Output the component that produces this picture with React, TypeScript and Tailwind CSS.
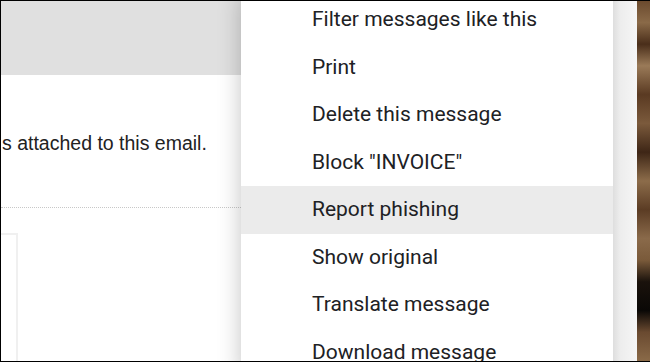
import React from 'react';

const menuItems = [
  'Filter messages like this',
  'Print',
  'Delete this message',
  'Block "INVOICE"',
  'Report phishing',
  'Show original',
  'Translate message',
  'Download message',
];

export default function App() {
  return (
    <div className="flex w-[650px] h-[362px] overflow-hidden border-y border-l border-black bg-white">
      {/* mail page */}
      <div className="relative w-[612px] h-full overflow-hidden bg-white">
        <div className="h-[74px] bg-[#e0e0e0]" />
        <div className="pt-[56px] font-['Liberation_Sans',Arial,sans-serif]">
          <p className="text-[19.5px] leading-[24px] text-[#222] pl-[1px]">s attached to this email.</p>
          <div className="mt-[52px] border-b border-dotted border-[#c8c8c8]" />
          <div className="mt-[25px] w-[17px] h-[140px] border-t-2 border-r-2 border-[#f0f0f0]" />
        </div>

        {/* overflow menu */}
        <div className="absolute right-0 top-[-5px] w-[372px] bg-white shadow-[0_0_22px_rgba(0,0,0,0.24)] font-['Roboto',sans-serif]">
          {menuItems.map((item) => (
            <div
              key={item}
              className={`h-[47.5px] flex items-center pl-[71px] text-[21px] text-[#202124] ${
                item === 'Report phishing' ? 'bg-[#ebebeb]' : ''
              }`}
            >
              {item}
            </div>
          ))}
        </div>
      </div>

      {/* window edge */}
      <div className="w-[24px] h-full bg-[linear-gradient(to_right,#dedede,#ededed_30%,#f6f6f6)]" />

      {/* desktop photo */}
      <div className="w-[13px] h-full bg-[linear-gradient(to_bottom,#6b4a2e,#8a6a48_6%,#4a2e1a_12%,#9a7a58_18%,#5a3a22_26%,#7b5a3c_34%,#3e2616_42%,#8c6c4a_50%,#5b3c24_58%,#8a6a4a_66%,#7a5a3a_72%,#1a120c_78%,#0a0806_86%,#6a4a30_92%,#8a6a48)]" />
    </div>
  );
}
